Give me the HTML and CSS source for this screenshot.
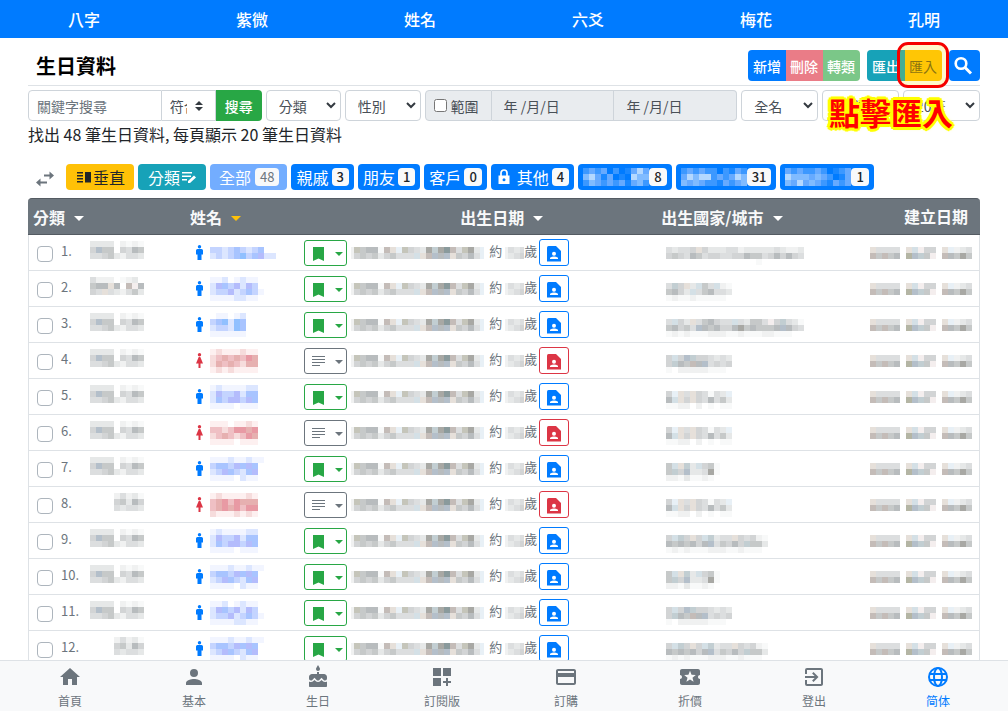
FILE: index.html
```html
<!DOCTYPE html>
<html lang="zh-Hant">
<head>
<meta charset="utf-8">
<meta name="viewport" content="width=device-width, initial-scale=1">
<title>生日資料</title>
<link rel="stylesheet" href="styles.css">
</head>
<body>
<nav class="topnav">
  <a href="#">八字</a><a href="#">紫微</a><a href="#">姓名</a><a href="#">六爻</a><a href="#">梅花</a><a href="#">孔明</a>
</nav>

<main class="page">
  <header class="titlebar">
    <h1>生日資料</h1>
    <div class="toolbar">
      <div class="group">
        <button class="btn primary" type="button">新增</button>
        <button class="btn danger" type="button" disabled>刪除</button>
        <button class="btn success" type="button" disabled>轉類</button>
      </div>
      <div class="group">
        <button class="btn info" type="button">匯出</button>
        <button class="btn warning" type="button">匯入</button>
      </div>
      <button class="btn primary search" type="button" aria-label="搜尋">
        <svg width="24" height="24" viewBox="0 0 24 24"><circle cx="9" cy="9.500" r="5.300" fill="none" stroke="#fff" stroke-width="2.600"/><path d="M13 13.500l6 6" stroke="#fff" stroke-width="3"/></svg>
      </button>
      <span class="highlight"></span>
      <strong class="callout">點擊匯入</strong>
    </div>
  </header>

  <form class="filters">
    <div class="joined keyword">
      <input class="field" type="text" placeholder="關鍵字搜尋" aria-label="關鍵字搜尋">
      <select class="field updown" aria-label="符合"><option>符合</option></select>
      <button class="btn success-solid" type="button">搜尋</button>
    </div>
    <select class="field pick" aria-label="分類"><option>分類</option></select>
    <select class="field pick" aria-label="性別"><option>性別</option></select>
    <div class="joined range">
      <label class="field addon"><input type="checkbox">範圍</label>
      <input class="field date" type="text" value="年 /月/日" aria-label="開始日期" disabled>
      <input class="field date" type="text" value="年 /月/日" aria-label="結束日期" disabled>
    </div>
    <select class="field pick" aria-label="全名"><option>全名</option></select>
    <select class="field pick" aria-label="排序"><option>排序</option></select>
    <select class="field pick" aria-label="每頁筆數"><option>20筆</option></select>
  </form>
  <p class="summary">找出 48 筆生日資料, 每頁顯示 20 筆生日資料</p>

  <div class="chips">
    <svg class="swap" width="20" height="20" viewBox="0 0 20 20" fill="#6c757d"><path d="M5.500 9.500L1 13.500l4.500 4v-3H12v-2H5.500zM19 6.500l-4.500-4v3H9v2h5.500v3z"/></svg>
    <button class="chip wide warning" type="button"><svg width="16" height="16" viewBox="0 0 16 16" fill="#212529"><path d="M1 3h6v1.500H1zM1 6h6v1.500H1zM1 9h6v1.500H1zM1 12h6v1.500H1zM9 3h6v10.500H9z"/></svg>垂直</button>
    <button class="chip wide info" type="button">分類<svg width="16" height="16" viewBox="0 0 16 16" fill="#fff"><path d="M1 3h10v1.600H1zM1 6.500h9v1.600H1zM1 10h5v1.600H1zM7 14v-2l6-5.500 2 2L9 14z"/></svg></button>
    <button class="chip muted" type="button" disabled>全部<span class="badge">48</span></button>
    <button class="chip" type="button">親戚<span class="badge">3</span></button>
    <button class="chip" type="button">朋友<span class="badge">1</span></button>
    <button class="chip" type="button">客戶<span class="badge">0</span></button>
    <button class="chip" type="button"><svg class="lock" width="16" height="16" viewBox="0 0 16 16"><path fill="#fff" d="M2.500 6.500h11V15h-11z"/><path d="M5 7V4a3 3 0 0 1 6 0v3" fill="none" stroke="#fff" stroke-width="1.700"/><circle cx="8" cy="10.700" r="1.500" fill="#007bff"/></svg>其他<span class="badge">4</span></button>
    <button class="chip blurred" type="button" aria-label="分類"><i data-m="uvuvzuzyvxv/wxvyvzyzxww/uwvuvuvyvwu"></i><span class="badge">8</span></button>
    <button class="chip blurred" type="button" aria-label="分類"><i data-m="uvuvuuzuyvu/vxwxxuvuvxw/wvwvuuyvuvw"></i><span class="badge">31</span></button>
    <button class="chip blurred" type="button" aria-label="分類"><i data-m="vuvuuvuzyuv/xwwwvwvuzyv/wvxvwvuyvuv"></i><span class="badge">1</span></button>
  </div>

  <table class="records">
    <thead>
      <tr>
        <th class="c-type">分類<span class="sort"></span></th>
        <th class="c-name">姓名<span class="sort active"></span></th>
        <th class="c-date">出生日期<span class="sort"></span></th>
        <th class="c-place">出生國家/城市<span class="sort"></span></th>
        <th class="c-made">建立日期</th>
      </tr>
    </thead>
    <tbody id="rows"></tbody>
  </table>
</main>

<nav class="tabs">
  <a href="#"><svg viewBox="0 0 24 24"><path d="M10 20v-6h4v6h5v-8h3L12 3 2 12h3v8z"/></svg>首頁</a>
  <a href="#"><svg viewBox="0 0 24 24"><path d="M12 12a4 4 0 1 0 0-8 4 4 0 0 0 0 8zm0 2c-2.700 0-8 1.300-8 4v2h16v-2c0-2.700-5.300-4-8-4z"/></svg>基本</a>
  <a href="#"><svg viewBox="0 0 24 24"><path d="M12 6c1.110 0 2-.9 2-2 0-.38-.1-.73-.29-1.030L12 0l-1.710 2.970c-.19.300-.29.650-.29 1.030 0 1.100.9 2 2 2zm4.600 9.990l-1.070-1.070-1.080 1.070c-1.300 1.300-3.580 1.310-4.890 0l-1.070-1.070-1.090 1.070C6.750 16.640 5.880 17 4.960 17c-.73 0-1.400-.23-1.960-.61V21c0 .55.45 1 1 1h16c.55 0 1-.45 1-1v-4.610c-.56.38-1.230.61-1.960.61-.92 0-1.790-.36-2.440-1.010zM18 9h-5V7h-2v2H6c-1.660 0-3 1.340-3 3v1.540c0 1.080.88 1.960 1.960 1.960.52 0 1.020-.2 1.380-.57l2.140-2.130 2.130 2.130c.74.740 2.030.740 2.770 0l2.140-2.130 2.130 2.130c.37.370.86.570 1.380.570 1.080 0 1.960-.88 1.960-1.960V12C21 10.340 19.660 9 18 9z"/></svg>生日</a>
  <a href="#"><svg viewBox="0 0 24 24"><path d="M3 3h8v8H3zM13 3h8v8h-8zM3 13h8v8H3zM18 13h-2v3h-3v2h3v3h2v-3h3v-2h-3z"/></svg>訂閱版</a>
  <a href="#"><svg viewBox="0 0 24 24"><path d="M20 4H4c-1.110 0-2 .89-2 2v12c0 1.110.89 2 2 2h16c1.110 0 2-.89 2-2V6c0-1.110-.89-2-2-2zm0 14H4v-6h16v6zm0-10H4V6h16v2z"/></svg>訂購</a>
  <a href="#"><svg viewBox="0 0 24 24"><path d="M20 12c0-1.100.9-2 2-2V6c0-1.100-.9-2-2-2H4c-1.100 0-2 .9-2 2v4c1.100 0 2 .9 2 2s-.9 2-2 2v4c0 1.100.9 2 2 2h16c1.100 0 2-.9 2-2v-4c-1.100 0-2-.9-2-2zm-4.420 4.800L12 14.500l-3.580 2.300 1.080-4.120-3.290-2.690 4.240-.25L12 5.800l1.540 3.950 4.240.25-3.290 2.690z"/></svg>折價</a>
  <a href="#"><svg viewBox="0 0 24 24"><path d="M10.090 15.590L11.500 17l5-5-5-5-1.410 1.410L12.670 11H3v2h9.670zM19 3H5a2 2 0 0 0-2 2v4h2V5h14v14H5v-4H3v4a2 2 0 0 0 2 2h14c1.100 0 2-.9 2-2V5c0-1.100-.9-2-2-2z"/></svg>登出</a>
  <a href="#" class="current"><svg viewBox="0 0 24 24" class="globe"><circle cx="12" cy="12" r="9"/><ellipse cx="12" cy="12" rx="4" ry="9"/><path d="M3.500 9h17M3.500 15h17"/></svg>简体</a>
</nav>
<script src="app.js"></script>
</body>
</html>
```
FILE: styles.css
```css
* { box-sizing: border-box; }
body {
  margin: 0;
  height: 100vh;
  display: flex;
  flex-direction: column;
  background: #fff;
  color: #212529;
  font: 16px/24px "Noto Sans CJK TC", sans-serif;
}
button, input, select { font: inherit; margin: 0; }
a { text-decoration: none; }
svg { display: block; flex: none; }

.topnav { display: grid; grid-template-columns: repeat(6, 1fr); flex: none; background: #007bff; }
.topnav a { color: #fff; text-align: center; font-weight: 500; line-height: 38px; }

.page { flex: 1; min-height: 0; overflow: hidden; padding: 0 28px; }
.titlebar {
  display: flex;
  align-items: center;
  justify-content: space-between;
  height: 48px;
  padding: 8px 0 0 8px;
  border-bottom: 1px solid #dee2e6;
}
h1 { margin: 0; font-size: 20px; line-height: 24px; font-weight: 700; color: #000; }
.toolbar { position: relative; display: flex; gap: 7px; }
.group { display: flex; border-radius: 4px; overflow: hidden; }
.btn {
  height: 31px;
  padding: 0 5px 0 4px;
  border: 0;
  color: #fff;
  font-size: 14px;
  font-weight: 500;
  white-space: nowrap;
}
.btn:first-child { padding-left: 5px; }
.primary { background: #007bff; }
.danger { background: #ea7c87; }
.success { background: #7bc788; }
.info { background: #17a2b8; color: #fff; }
.warning { background: #ffc107; color: #212529; }
.btn.success-solid { background: #28a745; border-radius: 0 4px 4px 0; padding: 0 9px; }
.btn.warning { font-weight: 400; color: #6f5a14; }
.btn.search { padding: 0 3px; border-radius: 4px; width: 31px; }
.highlight {
  position: absolute;
  right: 31px;
  top: -8px;
  width: 52px;
  height: 46px;
  border: 3px solid #f50000;
  border-radius: 11px;
  background: rgba(255, 220, 0, .2);
}
.callout {
  position: absolute;
  right: 27px;
  top: 42px;
  color: #f00;
  font-size: 31px;
  line-height: 40px;
  font-weight: 700;
  white-space: nowrap;
  text-shadow: 3px 0 #ff0, -3px 0 #ff0, 0 3px #ff0, 0 -3px #ff0, 2px 2px #ff0, -2px 2px #ff0, 2px -2px #ff0, -2px -2px #ff0, 0 0 4px #ff0;
}

.filters {
  display: grid;
  grid-template-columns: minmax(0, 234fr) minmax(0, 75fr) minmax(0, 76fr) minmax(0, 313fr) repeat(3, minmax(0, 77fr));
  gap: 4px;
  padding-top: 4px;
}
.joined { display: flex; min-width: 0; }
.field {
  height: 31px;
  min-width: 0;
  border: 1px solid #ced4da;
  border-radius: 4px;
  background-color: #fff;
  color: #495057;
  font-size: 14px;
  appearance: none;
}
.field::placeholder { color: #6c757d; }
.joined .field { border-radius: 0; }
.joined .field:first-child { border-radius: 4px 0 0 4px; }
.joined .field:last-child { border-radius: 0 4px 4px 0; }
.joined .field + .field { border-left: 0; }
.keyword input { flex: 1; padding: 0 8px; }
.updown {
  width: 54px;
  padding: 0 28px 0 8px;
  background: #fff url("data:image/svg+xml,%3Csvg xmlns='http://www.w3.org/2000/svg' viewBox='0 0 4 5'%3E%3Cpath fill='%23343a40' d='M2 0L0 2h4zm0 5L0 3h4z'/%3E%3C/svg%3E") no-repeat right 12px center / 8px 10px;
}
.pick {
  padding: 0 20px 0 12px;
  background: #fff url("data:image/svg+xml,%3Csvg xmlns='http://www.w3.org/2000/svg' viewBox='0 0 10 7'%3E%3Cpath fill='none' stroke='%23343a40' stroke-width='2' d='M1 1l4 4 4-4'/%3E%3C/svg%3E") no-repeat right 4px center / 10px 7px;
}
.range .field { background-color: #e9ecef; }
.addon { display: flex; align-items: center; gap: 4px; padding: 0 12px 0 8px; white-space: nowrap; }
.addon input { width: 13px; height: 13px; }
.date { flex: 1; padding: 0 12px; }
.summary { margin: 1px 0 0; }

.chips { display: flex; gap: 4px; padding-top: 18px; }
.swap { margin: 5px 7px 0 7px; }
.chip {
  display: flex;
  align-items: center;
  gap: 3px;
  height: 26px;
  padding: 0 5px;
  border: 0;
  border-radius: 4px;
  background: #007bff;
  color: #fff;
  white-space: nowrap;
}
.chip.wide { gap: 1px; padding: 0 9px 0 10px; }
.chip.info { background: #17a2b8; }
.chip.warning { background: #ffc107; color: #212529; }
.chip.muted { background: #73adff; padding: 0 8px 0 9px; gap: 4px; }
.chip.blurred { gap: 0; }
.lock { margin-right: 2px; }
.badge {
  padding: 0 5px;
  border-radius: 4px;
  background: #f8f9fa;
  color: #212529;
  font-size: 13px;
  line-height: 18px;
  font-weight: 500;
}
.muted .badge { color: #6c757d; font-weight: 400; }

.records {
  width: 100%;
  margin-top: 8px;
  table-layout: fixed;
  border-collapse: separate;
  border-spacing: 0;
  color: #6c757d;
}
th { height: 37px; padding: 0 5px; background: #6c757d; border: 0 solid #545b62; border-width: 1px 0; color: #f8f9fa; text-align: left; white-space: nowrap; }
th:first-child { border-top-left-radius: 4px; }
th:last-child { border-top-right-radius: 4px; }
.c-type { width: 16.500%; }
.c-name { width: 12%; }
.c-date { width: 37.500%; text-align: center; padding-left: 53px; }
.c-place { width: 18%; }
.c-made { text-align: right; padding-right: 12px; padding-bottom: 2px; }
.sort { display: inline-block; margin: 0 0 3px 9px; border: 5px solid transparent; border-top-color: #fff; border-bottom: 0; }
.sort.active { border-top-color: #ffc107; }
td { height: 36px; padding: 0; border-bottom: 1px solid #dee2e6; }
td:first-child { border-left: 1px solid #dee2e6; }
td:last-child { border-right: 1px solid #dee2e6; padding-right: 7px; }
.cell { display: flex; align-items: center; height: 35px; font-size: 13px; }
.end { justify-content: flex-end; }
.cell .txt { line-height: 18px; padding-bottom: 3px; }
.check { appearance: none; width: 16px; height: 16px; margin: 3px 8px 0; border: 1px solid #adb5bd; border-radius: 4px; background: #fff; }
.num { width: 29px; }
.name { padding-left: 11px; }
.name svg:first-child { margin-right: 7px; }
.place { padding-left: 10px; }
.mark { display: flex; align-items: center; gap: 7px; width: 43px; height: 26px; margin: 0 4px 0 5px; padding: 2px 4px 0 5px; border: 1px solid; border-radius: 3px; background: #fff; color: #28a745; }
.mark.plain { color: #6c757d; }
.mark span { border: 4px solid transparent; border-top-color: currentColor; border-bottom: 0; }
.about { margin: 0 3px 0 5px; }
.unit { margin-right: 2px; }
.card { display: flex; align-items: center; justify-content: center; width: 30px; height: 27px; padding: 3px 0 0; border: 1px solid; border-radius: 3px; background: #fff; color: #007bff; }
.card.f { color: #dc3545; }

.tabs { display: grid; grid-template-columns: repeat(8, 1fr); flex: none; height: 51px; padding: 4px 8px 0; border-top: 1px solid #dee2e6; background: #f8f9fa; }
.tabs a { display: flex; flex-direction: column; align-items: center; gap: 3px; color: #6c757d; font-size: 12px; line-height: 18px; }
.tabs svg { width: 24px; height: 24px; fill: currentColor; }
.tabs .current { color: #007bff; }
.tabs .globe { fill: none; stroke: currentColor; stroke-width: 2; }
```
FILE: app.js
```js
// Masked values are drawn as 6px colour tiles, one palette letter per tile.
const palette = {
  0: 'none', 1: '#f8f9f9', 2: '#f0f1f1', 3: '#e6e8e8', 4: '#dcdedf', 5: '#d2d4d5', 6: '#c6c9c9', 7: '#b8bcbe', 8: '#a8a8a4', 9: '#8a9a9c',
  a: '#e8f0f6', b: '#d4e0e6', c: '#b4bfca', d: '#e6e0da', e: '#c4bcb8', f: '#b4b5a4', g: '#f4eeee', h: '#c2ced2', A: '#c5c5ba',
  i: '#f2f5ff', j: '#dce6ff', k: '#c4d4ff', l: '#a8c4ff', m: '#b4bcfc', n: '#90c0ff',
  p: '#fdf0f0', q: '#f6dcdc', r: '#efc0c4', s: '#e6b0b0', t: '#e89aa4',
  u: '#3c98ff', v: '#66aaff', w: '#80bbff', x: '#b4d8ff', y: '#1a88ff', z: '#007bff'
};

function mosaic(pattern, inset = 0, trim = 0) {
  const lines = pattern.split('/');
  const w = lines[0].length * 6 - inset - trim;
  const h = lines.length * 6;
  let tiles = '';
  lines.forEach((line, y) => [...line].forEach((c, x) => {
    if (c !== '0') tiles += `<rect x="${x * 6}" y="${y * 6}" width="6" height="6" fill="${palette[c]}"/>`;
  }));
  return `<svg width="${w}" height="${h}" viewBox="${inset} 0 ${w} ${h}" shape-rendering="crispEdges">${tiles}</svg>`;
}

const types = {
  a: '333302121/5c6605476/445632443/000000000',
  b: '422201230/677d70eg7/54d432463/000000000',
  s: '000024231/000056375/000043443/000000000'
};
const names = [
  '00000000000/kkjklkjkl00/jkjklnklmjj/00000000000',
  'iij0ijii0/jmlkmjmk0/jkkmjklki/iiiijjii0',
  '0ii0ij/klnjnl/jkkjnl/iiiiii',
  'pqpppqpp/qrsrsrts/qsrsrqss/pqpqpppp',
  'ijiiiijj0/jmkkmjll0/jlkmmkml0/iiii0iii0',
  'ppp0ppqp/rrqrttst/qrsrqrts/pppp0ppp',
  'iiijiijii/kllkmlml0/jkmlkjlm0/iiii0jii0',
  'pqppppqp/rstrtsss/rststrtt/qpppqpqp'
];
const places = [
  '000000000000000000000000/43445d533344233333432230/565476455445576645757540/000000000000000100000000',
  '00000000000/4h5d3b64b21/6753b467443/12112111110',
  '00000000000000000000000/4b53d467544b43664g5h431/67564c7675578676667c754/12121112221121112211100',
  '00000000000/5b5ch554343/5h76e7c4545/10222221110',
  '00000000000/5ad4d54143a/7bd5d547463/11220201011',
  '000000000/6bdh3b561/6h5c33481/221311210',
  '00000000000000000/5bh5d5bh344d54521/7676757c46575h663/12121112221121110'
];

const faces = {
  m: '<svg width="7" height="15" viewBox="0 0 7 15" fill="#007bff"><circle cx="3.500" cy="1.700" r="1.700"/><path d="M1.500 4h4Q7 4 7 5.500V9.500H5.500V15h-4V9.500H0v-4Q0 4 1.500 4z"/></svg>',
  f: '<svg width="7" height="15" viewBox="0 0 7 15" fill="#dc3545"><circle cx="3.500" cy="1.700" r="1.700"/><path d="M2.700 4h1.600L7 10.500H4.500V15h-2v-4.500H0z"/></svg>'
};
const bookmark = '<svg width="18" height="18" viewBox="0 0 18 18" fill="currentColor"><path d="M3 2h11v14l-5.500-2.500L3 16z"/></svg>';
const lines = '<svg width="18" height="18" viewBox="0 0 18 18" fill="currentColor"><path d="M2 3h13v1H2zM2 6h13v1H2zM2 9h13v1H2zM2 12h8v1H2z"/></svg>';
const contact = '<svg width="18" height="18" viewBox="0 0 18 18"><path fill="currentColor" d="M3.500 1H11l5 5v10.500H2V2.500Q2 1 3.500 1z"/><circle cx="9" cy="8.700" r="2" fill="#fff"/><path fill="#fff" d="M5 14v-1.200Q9 10 13 12.800V14z"/></svg>';

// [type, sex, name, place]
const people = [
  ['a', 'm', 0, 0], ['b', 'm', 1, 1], ['a', 'm', 2, 2], ['a', 'f', 3, 3],
  ['a', 'm', 4, 4], ['a', 'f', 5, 4], ['a', 'm', 6, 5], ['s', 'f', 7, 4],
  ['a', 'm', 4, 6], ['a', 'm', 6, 5], ['a', 'm', 1, 3], ['s', 'm', 6, 6]
];
const birth = '00000000000000000000000/2A6771edaA5438h89e4A83a/25656356444bdec7cd6574a/00000000000000000000000';
const age = '0000/2434/2345/0000';
const made = '00000000000000000/d44440dbg550da234/e6e670fch6g0e7686/00000000000000000';

document.getElementById('rows').innerHTML = people.map(([type, sex, name, place], i) => `
  <tr>
    <td><div class="cell"><input class="check" type="checkbox" aria-label="選取 ${i + 1}"><span class="txt num">${i + 1}.</span>${mosaic(types[type])}</div></td>
    <td><div class="cell name">${faces[sex]}${mosaic(names[name])}</div></td>
    <td><div class="cell"><button type="button" class="mark ${sex === 'f' ? 'plain' : ''}" aria-label="標記">${sex === 'f' ? lines : bookmark}<span></span></button>${mosaic(birth, 3, 2)}<span class="txt about">約</span>${mosaic(age, 3, 2)}<span class="txt unit">歲</span><button type="button" class="card ${sex}" aria-label="命盤">${contact}</button></div></td>
    <td><div class="cell place">${mosaic(places[place])}</div></td>
    <td><div class="cell end">${mosaic(made)}</div></td>
  </tr>`).join('');

document.querySelectorAll('[data-m]').forEach(el => { el.outerHTML = mosaic(el.dataset.m); });
```
